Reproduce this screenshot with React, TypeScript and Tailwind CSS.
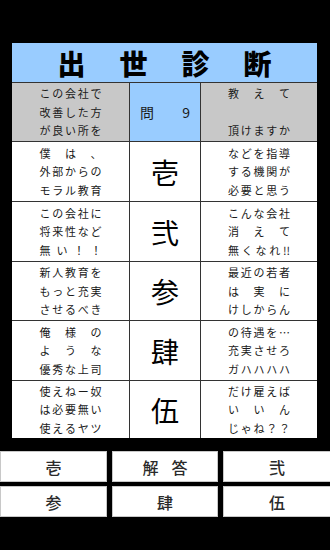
import React from "react";

const JP = { fontFamily: '"Noto Sans CJK JP", "Noto Sans", sans-serif' };

type Tok = string | string[];

function Line({ t, w }: { t: Tok; w: string }) {
  if (t === "") return <div className="h-[18.5px]" />;
  const toks = Array.isArray(t) ? t : Array.from(t);
  return (
    <div className={`flex justify-between h-[18.5px] items-center ${w}`}>
      {toks.map((c, i) => (
        <span key={i}>{c}</span>
      ))}
    </div>
  );
}

function TextCell({ lines, bg }: { lines: Tok[]; bg: string }) {
  return (
    <div className={`${bg} flex flex-col items-center justify-center text-[11px] leading-none text-[#1a1a1a]`}>
      {lines.map((l, i) => (
        <Line key={i} t={l} w="w-[62px]" />
      ))}
    </div>
  );
}

const rows: { left: Tok[]; mid: string; right: Tok[] }[] = [
  { left: ["僕は、", "外部からの", "モラル教育"], mid: "壱", right: ["などを指導", "する機関が", "必要と思う"] },
  { left: ["この会社に", "将来性など", ["無", "い", "！", "！"]], mid: "弐", right: ["こんな会社", "消えて", ["無", "く", "な", "れ", "!!"]] },
  { left: ["新人教育を", "もっと充実", "させるべき"], mid: "参", right: ["最近の若者", "は実に", "けしからん"] },
  { left: ["俺様の", "ような", "優秀な上司"], mid: "肆", right: ["の待遇を…", "充実させろ", "ガハハハハ"] },
  { left: ["使えねー奴", "は必要無い", "使えるヤツ"], mid: "伍", right: ["だけ雇えば", "いいん", "じゃね？？"] },
];

function Btn({ children }: { children: React.ReactNode }) {
  return (
    <div className="bg-white border border-[#c8c8c8] flex items-center justify-center text-[16px] font-medium text-[#2a2a2a]">
      {children}
    </div>
  );
}

export default function App() {
  return (
    <div className="w-[330px] h-[550px] bg-black flex flex-col" style={JP}>
      <div className="h-[43px]" />
      <div className="ml-[12px] w-[305px] bg-[#333] flex flex-col gap-px">
        <div className="h-[39px] bg-[#99ccff] flex items-center justify-center gap-[34px] text-[28px] font-black text-black leading-none">
          <span>出</span>
          <span>世</span>
          <span>診</span>
          <span>断</span>
        </div>
        <div className="grid grid-cols-[117px_70px_116px] grid-rows-[58px_59px_59px_58px_59px_57px] gap-px">
          <TextCell bg="bg-[#c8c8c8]" lines={["この会社で", "改善した方", "が良い所を"]} />
          <div className="bg-[#99ccff] flex items-center justify-center">
            <div className="w-[50px] flex justify-between text-[14px] leading-none text-[#1a1a1a]">
              <span>問</span>
              <span>9</span>
            </div>
          </div>
          <TextCell bg="bg-[#c8c8c8]" lines={["教えて", "", "頂けますか"]} />
          {rows.map((r, i) => (
            <React.Fragment key={i}>
              <TextCell bg="bg-white" lines={r.left} />
              <div className="bg-white flex items-center justify-center text-[28px] font-normal leading-none text-black">
                {r.mid}
              </div>
              <TextCell bg="bg-white" lines={r.right} />
            </React.Fragment>
          ))}
        </div>
      </div>
      <div className="h-[13px]" />
      <div className="grid grid-cols-[107px_106px_108px] grid-rows-[31px_31px] gap-x-[5px] gap-y-[4px]">
        <Btn>壱</Btn>
        <Btn>
          <span className="flex gap-[13px]">
            <span>解</span>
            <span>答</span>
          </span>
        </Btn>
        <Btn>弐</Btn>
        <Btn>参</Btn>
        <Btn>肆</Btn>
        <Btn>伍</Btn>
      </div>
    </div>
  );
}
